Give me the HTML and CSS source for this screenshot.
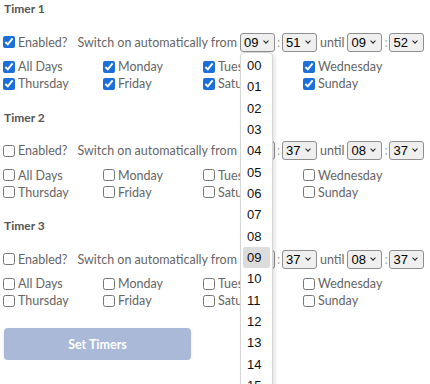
FILE: index.html
```html
<!DOCTYPE html>
<html lang="en">
<head>
    <meta charset="UTF-8">
    <meta name="viewport" content="width=device-width, initial-scale=1.0">
    <title>Timers</title>
    <link rel="stylesheet" href="styles.css">
</head>
<body>
    <div class="timer">
        <h3 class="timer-title">Timer 1</h3>
        <div class="enable-row">
            <label class="check"><input type="checkbox" checked>Enabled?</label>
            <span class="switch-text">Switch on automatically from</span>
            <span class="select-wrap"><select class="hours" data-value="09"></select></span>
            <span class="colon">:</span>
            <span class="select-wrap"><select class="minutes" data-value="51"></select></span>
            <span class="until">until</span>
            <span class="select-wrap"><select class="hours" data-value="09"></select></span>
            <span class="colon">:</span>
            <span class="select-wrap"><select class="minutes" data-value="52"></select></span>
        </div>
        <div class="days">
            <label class="check"><input type="checkbox" checked>All Days</label>
            <label class="check"><input type="checkbox" checked>Monday</label>
            <label class="check"><input type="checkbox" checked>Tuesday</label>
            <label class="check"><input type="checkbox" checked>Wednesday</label>
            <label class="check"><input type="checkbox" checked>Thursday</label>
            <label class="check"><input type="checkbox" checked>Friday</label>
            <label class="check"><input type="checkbox" checked>Saturday</label>
            <label class="check"><input type="checkbox" checked>Sunday</label>
        </div>
    </div>

    <div class="timer">
        <h3 class="timer-title">Timer 2</h3>
        <div class="enable-row">
            <label class="check"><input type="checkbox">Enabled?</label>
            <span class="switch-text">Switch on automatically from</span>
            <span class="select-wrap"><select class="hours" data-value="08"></select></span>
            <span class="colon">:</span>
            <span class="select-wrap"><select class="minutes" data-value="37"></select></span>
            <span class="until">until</span>
            <span class="select-wrap"><select class="hours" data-value="08"></select></span>
            <span class="colon">:</span>
            <span class="select-wrap"><select class="minutes" data-value="37"></select></span>
        </div>
        <div class="days">
            <label class="check"><input type="checkbox">All Days</label>
            <label class="check"><input type="checkbox">Monday</label>
            <label class="check"><input type="checkbox">Tuesday</label>
            <label class="check"><input type="checkbox">Wednesday</label>
            <label class="check"><input type="checkbox">Thursday</label>
            <label class="check"><input type="checkbox">Friday</label>
            <label class="check"><input type="checkbox">Saturday</label>
            <label class="check"><input type="checkbox">Sunday</label>
        </div>
    </div>

    <div class="timer">
        <h3 class="timer-title">Timer 3</h3>
        <div class="enable-row">
            <label class="check"><input type="checkbox">Enabled?</label>
            <span class="switch-text">Switch on automatically from</span>
            <span class="select-wrap"><select class="hours" data-value="08"></select></span>
            <span class="colon">:</span>
            <span class="select-wrap"><select class="minutes" data-value="37"></select></span>
            <span class="until">until</span>
            <span class="select-wrap"><select class="hours" data-value="08"></select></span>
            <span class="colon">:</span>
            <span class="select-wrap"><select class="minutes" data-value="37"></select></span>
        </div>
        <div class="days">
            <label class="check"><input type="checkbox">All Days</label>
            <label class="check"><input type="checkbox">Monday</label>
            <label class="check"><input type="checkbox">Tuesday</label>
            <label class="check"><input type="checkbox">Wednesday</label>
            <label class="check"><input type="checkbox">Thursday</label>
            <label class="check"><input type="checkbox">Friday</label>
            <label class="check"><input type="checkbox">Saturday</label>
            <label class="check"><input type="checkbox">Sunday</label>
        </div>
    </div>

    <button class="set-button" disabled>Set Timers</button>

    <!-- open hour list of the first select -->
    <div class="dropdown-list" id="hour-list"></div>

    <script>
        function pad(n) {
            return String(n).padStart(2, '0');
        }

        // Fill hour / minute selects
        document.querySelectorAll('select').forEach(sel => {
            const max = sel.classList.contains('hours') ? 24 : 60;
            for (let i = 0; i < max; i++) {
                const opt = document.createElement('option');
                opt.textContent = pad(i);
                sel.appendChild(opt);
            }
            sel.value = sel.dataset.value;
        });

        // Dropdown list shown open
        const list = document.getElementById('hour-list');
        for (let i = 0; i < 24; i++) {
            const item = document.createElement('div');
            item.className = 'dropdown-item' + (i === 9 ? ' active' : '');
            item.textContent = pad(i);
            list.appendChild(item);
        }
    </script>
</body>
</html>
```

FILE: styles.css
```css
html {
    overflow: hidden;
}
body {
    font-family: Lato, "Liberation Sans", sans-serif;
    font-size: 12.5px;
    margin: 0;
    padding: 0 3px;
    background-color: #fff;
    color: #666;
}
.timer {
    margin-bottom: 16.5px;
}
.timer-title {
    margin: 0 0 14px 1px;
    font-size: 12px;
    font-weight: bold;
    line-height: 18px;
    color: #555;
}
.enable-row {
    display: flex;
    align-items: center;
    height: 20px;
    margin-bottom: 6px;
    white-space: nowrap;
}
.check {
    display: flex;
    align-items: center;
    height: 17px;
}
.check input {
    width: 12px;
    height: 12px;
    margin: 0 3px 0 0;
    accent-color: #1b6fd9;
}
.switch-text {
    margin-left: 10px;
    margin-right: 3px;
}
.colon {
    color: #aaa;
    width: 3px;
    margin: 0 2px;
}
.until {
    margin: 0 3px;
}
.select-wrap {
    position: relative;
    display: inline-flex;
    flex: none;
}
.select-wrap::after {
    content: '';
    position: absolute;
    right: 7px;
    top: 6px;
    width: 3px;
    height: 3px;
    border-right: 1.5px solid #222;
    border-bottom: 1.5px solid #222;
    transform: rotate(45deg);
    pointer-events: none;
}
select {
    appearance: none;
    width: 35px;
    height: 19px;
    margin: 0;
    padding: 0 0 0 3px;
    font-family: "Liberation Sans", Arial, sans-serif;
    font-size: 13px;
    color: #000;
    background-color: #efefef;
    border: 1px solid #8f8f8f;
    border-radius: 3px;
}
.days {
    display: grid;
    grid-template-columns: repeat(4, 100px);
    grid-auto-rows: 17px;
}
.set-button {
    display: block;
    margin: 19px 0 0 1px;
    width: 187px;
    height: 32px;
    border: none;
    border-radius: 4px;
    background-color: #a9b9d7;
    color: #fff;
    font-family: Lato, "Liberation Sans", sans-serif;
    font-size: 12.5px;
    font-weight: bold;
    box-shadow: 0 1px 3px rgba(0, 0, 0, 0.12);
}
.dropdown-list {
    position: absolute;
    left: 240px;
    top: 52px;
    width: 33px;
    height: 340px;
    overflow: hidden;
    padding-top: 2px;
    box-sizing: border-box;
    background-color: #fff;
    border: 1px solid #d6d6d6;
    border-radius: 4px 4px 0 0;
    box-shadow: 2px 2px 4px rgba(0, 0, 0, 0.12);
    font-family: "Liberation Sans", Arial, sans-serif;
    font-size: 13px;
    color: #111;
}
.dropdown-item {
    height: 21.33px;
    line-height: 21.33px;
    width: 27px;
    margin-left: 2px;
    padding-left: 4px;
    box-sizing: border-box;
    border-radius: 2px;
}
.dropdown-item.active {
    background-color: #dcdcdc;
}
```
